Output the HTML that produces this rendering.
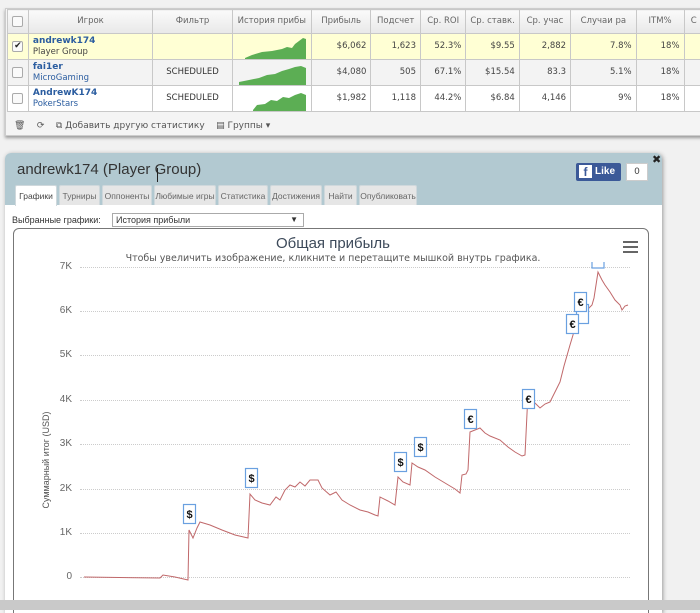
<!DOCTYPE html>
<html><head><meta charset="utf-8"><style>
*{box-sizing:border-box;margin:0;padding:0}
body{width:700px;height:610px;background:#f1f1f1;position:relative;overflow:hidden;font-family:"DejaVu Sans","Liberation Sans",sans-serif}
.abs{position:absolute}
#tbl{left:5px;top:8px;width:700px;height:128px;background:#f4f4f4;border:1px solid #ccc;box-shadow:0 2px 3px #999}
table{border-collapse:collapse;position:absolute;left:1px;top:0;font-size:8.5px;color:#444;table-layout:fixed}
td{border:1px solid #c8c8c8;height:26px;padding:0 4px;text-align:right;white-space:nowrap;overflow:hidden;line-height:11px}
tr.h td{height:24px;background:linear-gradient(#fafafa,#e8e8e8);text-align:center;color:#666}
tr.y td{background:#ffffd4}
tr.g td{background:#f3f3f3}
tr.w td{background:#fff}
td.n{text-align:left}
.n b{color:#2b5da0;font-size:9px}
.n span{color:#444}
.n span.bl{color:#2b5da0}
.cb{display:inline-block;width:11px;height:11px;border:1px solid #aaa;border-radius:2px;background:#fafafa;vertical-align:middle;font-size:9px;line-height:9px;text-align:center;color:#222}
td.c{text-align:center;color:#333}
svg.sp{display:block}
#foot{left:8px;top:112px;font-size:9px;color:#555}
#dlg{left:5px;top:153px;width:657px;height:460px;background:#fff;border-radius:6px 6px 0 0;box-shadow:1px 1px 4px #999;overflow:hidden}
#hd{left:0;top:0;width:657px;height:52px;background:#b2c9d1}
.tab{position:absolute;top:32px;height:20px;background:#e6e6e6;border:1px solid #cfd8dc;border-bottom:none;font-family:"Liberation Sans",sans-serif;font-size:8.5px;color:#666;text-align:center;line-height:20px;border-radius:2px 2px 0 0;white-space:nowrap;overflow:hidden}
.tab.a{background:#fff;color:#444;height:21px}
#grid div{position:absolute;left:80px;width:550px;border-top:1px dotted #ccc}
.yl{position:absolute;font-family:"Liberation Sans",sans-serif;font-size:10px;color:#666;text-align:right;width:30px;left:42px}
</style></head><body>
<div id="tbl" class="abs">
<table>
<colgroup><col style="width:21px"><col style="width:131px"><col style="width:82px"><col style="width:77px"><col style="width:61px"><col style="width:50px"><col style="width:46px"><col style="width:52px"><col style="width:52px"><col style="width:67px"><col style="width:50px"><col style="width:20px"></colgroup>
<tr class="h"><td><span class="cb"></span></td><td>Игрок</td><td>Фильтр</td><td>История прибы</td><td>Прибыль</td><td>Подсчет</td><td>Ср. ROI</td><td>Ср. ставк.</td><td>Ср. учас</td><td>Случаи ра</td><td>ITM%</td><td>С</td></tr>
<tr class="y"><td class="c"><span class="cb">✔</span></td><td class="n"><b>andrewk174</b><br><span>Player Group</span></td><td></td><td><svg class="sp" width="70" height="24"><path d="M8 23 L15 20 L25 17 L35 16 L45 14 L50 12 L55 13 L58 9 L62 6 L66 3 L69 4 L69 24 L8 24Z" fill="#5cae54"/></svg></td><td>$6,062</td><td>1,623</td><td>52.3%</td><td>$9.55</td><td>2,882</td><td>7.8%</td><td>18%</td><td></td></tr>
<tr class="g"><td class="c"><span class="cb"></span></td><td class="n"><b>fai1er</b><br><span class="bl">MicroGaming</span></td><td class="c">SCHEDULED</td><td><svg class="sp" width="70" height="24"><path d="M2 21 L12 19 L22 17 L30 14 L38 13 L45 10 L52 8 L58 6 L64 5 L69 7 L69 24 L2 24Z" fill="#5cae54"/></svg></td><td>$4,080</td><td>505</td><td>67.1%</td><td>$15.54</td><td>83.3</td><td>5.1%</td><td>18%</td><td></td></tr>
<tr class="w"><td class="c"><span class="cb"></span></td><td class="n"><b>AndrewK174</b><br><span class="bl">PokerStars</span></td><td class="c">SCHEDULED</td><td><svg class="sp" width="70" height="24"><path d="M16 23 L20 18 L28 17 L34 13 L40 14 L46 10 L52 11 L58 8 L64 6 L69 8 L69 24 L16 24Z" fill="#5cae54"/></svg></td><td>$1,982</td><td>1,118</td><td>44.2%</td><td>$6.84</td><td>4,146</td><td>9%</td><td>18%</td><td></td></tr>
</table>
<div id="foot" class="abs">🗑&nbsp;&nbsp;&nbsp;&nbsp;⟳&nbsp;&nbsp;&nbsp;&nbsp;⧉ Добавить другую статистику&nbsp;&nbsp;&nbsp;&nbsp;▤ Группы ▾</div>
</div>

<div id="dlg" class="abs">
<div id="hd" class="abs"></div>
<div class="abs" style="left:12px;top:8px;font-family:'Liberation Sans',sans-serif;font-size:15px;color:#333">andrewk174 (Player Group)</div>
<div class="abs" style="left:571px;top:10px;width:45px;height:18px;background:#3b5998;border-radius:2px;color:#fff;font-family:'Liberation Sans',sans-serif;font-weight:bold;font-size:10px;line-height:18px"><span style="display:inline-block;width:13px;height:13px;background:#fff;color:#3b5998;margin:2px 3px 0 3px;vertical-align:top;text-align:center;line-height:15px;font-size:12px">f</span>Like</div>
<div class="abs" style="left:621px;top:10px;width:22px;height:18px;background:#fff;border:1px solid #ccc;font-size:9px;text-align:center;line-height:16px;color:#444">0</div>
<div class="abs" style="left:647px;top:0px;font-size:11px;font-weight:bold;color:#222">✖</div>
<div class="tab a" style="left:10px;width:42px">Графики</div>
<div class="tab" style="left:54px;width:41px">Турниры</div>
<div class="tab" style="left:97px;width:50px">Оппоненты</div>
<div class="tab" style="left:149px;width:62px">Любимые игры</div>
<div class="tab" style="left:213px;width:50px">Статистика</div>
<div class="tab" style="left:265px;width:52px">Достижения</div>
<div class="tab" style="left:319px;width:33px">Найти</div>
<div class="tab" style="left:354px;width:58px">Опубликовать</div>
<div class="abs" style="left:7px;top:62px;font-family:'Liberation Sans',sans-serif;font-size:9px;color:#333">Выбранные графики:</div>
<div class="abs" style="left:107px;top:60px;width:192px;height:14px;border:1px solid #aaa;font-family:'Liberation Sans',sans-serif;font-size:9px;padding-left:3px;line-height:12px;color:#333">История прибыли<span style="position:absolute;right:5px;font-size:8px">▼</span></div>
<div class="abs" style="left:8px;top:75px;width:636px;height:400px;border:1px solid #777;border-radius:6px"></div>
</div>

<div class="abs" style="left:0;top:235px;width:666px;text-align:center;font-family:'Liberation Sans',sans-serif;font-size:15px;color:#3d4a5a">Общая прибыль</div>
<div class="abs" style="left:0;top:253px;width:666px;text-align:center;font-family:'DejaVu Sans',sans-serif;font-size:9.5px;color:#555">Чтобы увеличить изображение, кликните и перетащите мышкой внутрь графика.</div>
<div class="abs" style="left:623px;top:241px;width:15px;height:12px;border-top:2px solid #666;border-bottom:2px solid #666"><div style="margin-top:3px;border-top:2px solid #666"></div></div>
<div id="grid"><div style="top:267px"></div><div style="top:311px"></div><div style="top:355px"></div><div style="top:400px"></div><div style="top:444px"></div><div style="top:489px"></div><div style="top:533px"></div><div style="top:577px"></div></div>
<div class="yl" style="top:261px">7K</div><div class="yl" style="top:305px">6K</div><div class="yl" style="top:349px">5K</div><div class="yl" style="top:394px">4K</div><div class="yl" style="top:438px">3K</div><div class="yl" style="top:483px">2K</div><div class="yl" style="top:527px">1K</div><div class="yl" style="top:571px">0</div>
<div class="abs" style="left:-14px;top:455px;width:120px;transform:rotate(-90deg);transform-origin:center;font-family:'Liberation Sans',sans-serif;font-size:9px;color:#555;text-align:center;white-space:nowrap">Суммарный итог (USD)</div>
<svg class="abs" style="left:0;top:0" width="700" height="610">
<path d="M84 577 L160 578 L163 575 L175 577 L188 580 L189 530 L193 538 L197 528 L200 522 L210 525 L222 530 L235 535 L248 538 L250 494 L255 500 L262 503 L270 505 L276 497 L280 500 L285 490 L290 485 L295 487 L300 482 L305 486 L310 480 L318 480 L322 488 L330 495 L336 492 L342 500 L350 505 L360 510 L368 512 L375 515 L378 516 L380 497 L388 501 L395 505 L398 477 L403 482 L410 485 L412 463 L418 467 L425 470 L435 477 L445 483 L455 489 L460 493 L462 475 L466 474 L468 470 L470 432 L475 430 L480 428 L485 433 L490 436 L500 440 L508 447 L515 452 L522 456 L525 455 L528 393 L530 400 L535 403 L540 408 L545 404 L550 402 L556 390 L560 382 L564 366 L568 352 L570 345 L573 335 L576 320 L580 318 L582 315 L587 310 L592 305 L594 298 L598 272 L602 280 L605 285 L610 292 L615 300 L620 305 L622 310 L625 306 L628 305" fill="none" stroke="#c0686a" stroke-width="1"/>
<g font-family="Liberation Sans,sans-serif" font-weight="bold" font-size="11" text-anchor="middle">
<g fill="#fff" stroke="#6aa0e0" stroke-width="1.2">
<rect x="183.5" y="504.5" width="12" height="19"/><rect x="245.5" y="468.5" width="12" height="19"/><rect x="394.5" y="452.5" width="12" height="19"/><rect x="414.5" y="437.5" width="12" height="19"/><rect x="464.5" y="409.5" width="12" height="19"/><rect x="522.5" y="389.5" width="12" height="19"/><rect x="576.5" y="304.5" width="12" height="19"/><rect x="574.5" y="292.5" width="12" height="19"/><rect x="566.5" y="314.5" width="12" height="19"/><path d="M592 262 L592 268 L604 268 L604 262"/>
</g>
<g fill="#111"><text x="189.5" y="518">$</text><text x="251.5" y="482">$</text><text x="400.5" y="466">$</text><text x="420.5" y="451">$</text><text x="470.5" y="423">€</text><text x="528.5" y="403">€</text><text x="580.5" y="306">€</text><text x="572.5" y="328">€</text></g>
</g>
<rect x="0" y="600" width="700" height="10" fill="#c9c9c9"/>
</svg>
<div class="abs" style="left:157px;top:168px;width:1px;height:14px;background:#222"></div>
</body></html>
